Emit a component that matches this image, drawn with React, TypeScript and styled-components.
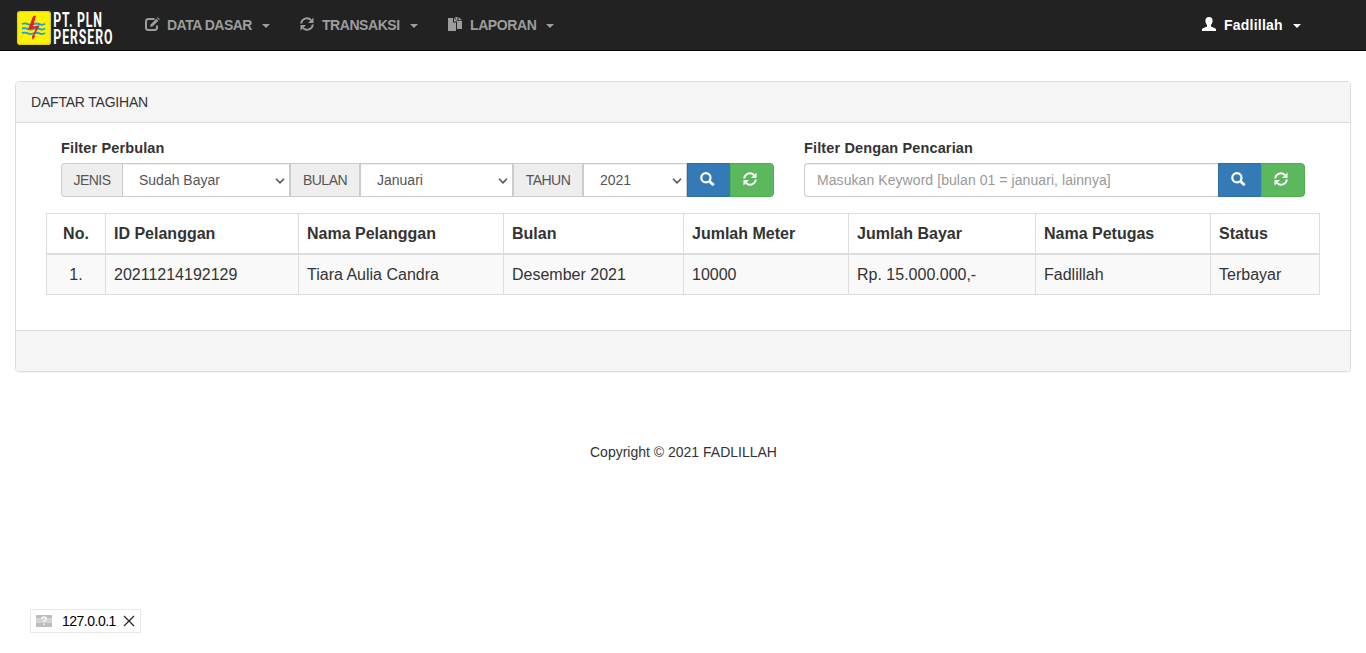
import React from "react";
import styled, { createGlobalStyle } from "styled-components";

const Global = createGlobalStyle`
  *, *::before, *::after { box-sizing: border-box; }
  body {
    margin: 0;
    background: #fff;
    color: #333;
    font: 14px/20px "Liberation Sans", Arial, sans-serif;
    overflow: hidden;
  }
`;

const Page = styled.div`
  display: flex;
  flex-direction: column;
  height: 653px;
`;

const Navbar = styled.nav`
  display: flex;
  height: 51px;
  flex: none;
  background: #222;
  border-bottom: 1px solid #080808;
  padding: 0 50px 0 15px;
`;

const Brand = styled.a`
  width: 115px;
  height: 50px;
  padding-top: 8px;
`;

const NavItem = styled.a<{ $w?: number; $spacing: number; $active?: boolean }>`
  display: flex;
  align-items: center;
  width: ${(p) => p.$w}px;
  height: 50px;
  padding: 0 15px;
  margin-left: ${(p) => (p.$active ? "auto" : "0")};
  color: ${(p) => (p.$active ? "#fff" : "#9d9d9d")};
  font-weight: bold;
  letter-spacing: ${(p) => p.$spacing}px;
  white-space: pre;
`;

const NavIcon = styled.svg`
  width: 15px;
  height: 14px;
  margin: -3px 7px 0 0;
  flex: none;
`;

const Caret = styled.span`
  margin: 2px 0 0 auto;
  border: 4px solid transparent;
  border-top-color: currentColor;
  border-bottom: 0;
`;

const Panel = styled.section`
  flex: none;
  margin: 30px 15px 0;
  border: 1px solid #ddd;
  border-radius: 4px;
  box-shadow: 0 1px 1px rgba(0, 0, 0, 0.05);
`;

const PanelHeading = styled.header`
  padding: 10px 15px;
  background: #f5f5f5;
  border-bottom: 1px solid #ddd;
  border-radius: 3px 3px 0 0;
  letter-spacing: -0.2px;
`;

const PanelBody = styled.div`
  padding: 15px 30px 35px;
`;

const PanelFooter = styled.footer`
  height: 41px;
  background: #f5f5f5;
  border-top: 1px solid #ddd;
  border-radius: 0 0 3px 3px;
`;

const Filters = styled.div`
  display: grid;
  grid-template-columns: 713px 501px;
  column-gap: 30px;
  padding: 0 15px;
  margin-bottom: 16px;
`;

const FilterLabel = styled.div`
  font-size: 14.5px;
  font-weight: bold;
  letter-spacing: 0.13px;
  margin-bottom: 5px;
`;

const InputGroup = styled.div`
  display: flex;
  height: 34px;
`;

const Addon = styled.span<{ $w: number; $first?: boolean }>`
  width: ${(p) => p.$w}px;
  padding: 6px 0;
  text-align: center;
  letter-spacing: -0.5px;
  background: #eee;
  color: #555;
  border: 1px solid #ccc;
  border-right-width: ${(p) => (p.$first ? 0 : 1)}px;
  border-radius: ${(p) => (p.$first ? "4px 0 0 4px" : "0")};
`;

const SelectBox = styled.div<{ $w: number }>`
  display: grid;
  align-items: center;
  width: ${(p) => p.$w}px;
  & > * { grid-area: 1 / 1; }
`;

const SelectField = styled.select`
  appearance: none;
  width: 100%;
  height: 34px;
  padding: 6px 16px;
  font: inherit;
  color: #555;
  background: #fff;
  border: 1px solid #ccc;
  border-radius: 0;
  box-shadow: inset 0 1px 1px rgba(0, 0, 0, 0.075);
`;

const Chevron = styled.svg`
  justify-self: end;
  margin: 1px 5px 0 0;
  pointer-events: none;
`;

const Select = ({ width, value }: { width: number; value: string }) => (
  <SelectBox $w={width}>
    <SelectField><option>{value}</option></SelectField>
    <Chevron width="10" height="6" viewBox="0 0 10 6" fill="none" stroke="#555" strokeWidth="1.600">
      <path d="M1 .8L5 4.800L9 .8" />
    </Chevron>
  </SelectBox>
);

const SearchInput = styled.input`
  flex: 1;
  min-width: 0;
  height: 34px;
  padding: 6px 12px;
  font: inherit;
  letter-spacing: 0.07px;
  color: #555;
  border: 1px solid #ccc;
  border-right: 0;
  border-radius: 4px 0 0 4px;
  box-shadow: inset 0 1px 1px rgba(0, 0, 0, 0.075);
  &::placeholder { color: #999; }
`;

const Button = styled.button<{ $kind: "search" | "refresh" }>`
  width: ${(p) => (p.$kind === "search" ? 43 : 44)}px;
  height: 34px;
  padding: 0 0 2px 12px;
  display: flex;
  align-items: center;
  color: #fff;
  background: ${(p) => (p.$kind === "search" ? "#337ab7" : "#5cb85c")};
  border: 1px solid ${(p) => (p.$kind === "search" ? "#2e6da4" : "#4cae4c")};
  border-right-width: ${(p) => (p.$kind === "search" ? 0 : 1)}px;
  border-radius: ${(p) => (p.$kind === "search" ? "0" : "0 4px 4px 0")};
`;

const Table = styled.table`
  width: 1274px;
  table-layout: fixed;
  border-collapse: collapse;
  font-size: 16px;
  line-height: 22px;
`;

const Th = styled.th<{ $w: number; $center?: boolean }>`
  width: ${(p) => p.$w}px;
  height: 40px;
  padding: 9px 8px 7px;
  text-align: ${(p) => (p.$center ? "center" : "left")};
  border: 1px solid #ddd;
  border-bottom-width: 2px;
`;

const Td = styled.td<{ $center?: boolean }>`
  height: 41px;
  padding: 9px 8px 8px;
  text-align: ${(p) => (p.$center ? "center" : "left")};
  background: #f9f9f9;
  border: 1px solid #ddd;
`;

const Copyright = styled.p`
  margin: 70px 0 0 1px;
  text-align: center;
`;

const HostChip = styled.div`
  display: flex;
  align-items: center;
  align-self: flex-start;
  width: 111px;
  height: 24px;
  margin: auto 0 20px 30px;
  padding-left: 5px;
  border: 1px solid #e8e8e8;
  color: #000;
`;

const HostName = styled.span`
  width: 54px;
  margin: 0 7px 0 10px;
  letter-spacing: -0.5px;
`;

const Logo = () => (
  <svg width="100" height="42" viewBox="0 0 100 42">
    <rect x="2.6" y="3.6" width="32.8" height="32.8" rx="2.5" fill="#fff200" stroke="#d9cf2c" strokeWidth="1.3" />
    <g fill="none" stroke="#1ba1e2" strokeWidth="1.900">
      {[16.3, 21, 25.5].map((y) => (
        <path key={y} d={`M7 ${y - 0.5}q3 -1 5.800 .4t5.800 0t5.800 0t5.800 -.4`} />
      ))}
    </g>
    <path d="M18 8.300L21 7.600L18 18.500L24.700 17.300L19.300 27.500L20.300 28L17.500 32L16.900 27.400L18 27.500L21 20L13 21.800z" fill="#e31e24" />
    <g fill="#fff" fontFamily="Roboto, 'Liberation Sans', sans-serif" fontWeight="700" fontSize="19.500" letterSpacing="2">
      <text transform="translate(38.300 18.600) scale(.63 1)" textLength="79" lengthAdjust="spacing">PT. PLN</text>
      <text transform="translate(38.300 35.600) scale(.63 1)" textLength="96" lengthAdjust="spacing">PERSERO</text>
    </g>
  </svg>
);

const EditIcon = () => (
  <NavIcon viewBox="0 0 15 14" fill="none" stroke="currentColor" strokeWidth="2">
    <path d="M9.500 2H3.500Q1 2 1 4.500V10.500Q1 13 3.500 13H9.500Q12 13 12 10.500V8.500" />
    <path d="M5 10L5.800 7.200 11.300 1.700 13.300 3.700 7.800 9.200Z" fill="currentColor" stroke="none" />
    <path d="M12 1l.8-.8 2 2-.8.8z" fill="currentColor" stroke="none" />
  </NavIcon>
);

const RefreshShape = () => (
  <>
    <path d="M1.200 6.500A5.700 5.700 0 0 1 11 3M12.800 7.500A5.700 5.700 0 0 1 3 11" fill="none" stroke="currentColor" strokeWidth="1.900" />
    <path d="M13.500.5V6H8zM.5 13.500V8H6z" fill="currentColor" />
  </>
);

const RefreshIcon = () => (
  <NavIcon viewBox="0 0 15 14"><RefreshShape /></NavIcon>
);

const FilesIcon = () => (
  <NavIcon viewBox="0 0 15 14" fill="currentColor">
    <path d="M0 1H5V5.500H8V14H0zM6 0.500L9 4.500H6z" />
    <path d="M7 0H9.500V4H14V12H9V4.500zM10.500 0L14 3.200H10.500z" />
  </NavIcon>
);

const UserIcon = () => (
  <NavIcon viewBox="0 0 15 14" fill="currentColor">
    <path d="M7 0C9.400 0 10.800 1.500 10.600 4C10.500 5.800 9.700 7 9 8V9.500L13 11.200Q14 11.700 14 12.500V14H0V12.500Q0 11.700 1 11.200L5 9.500V8C4.300 7 3.500 5.800 3.400 4C3.200 1.500 4.600 0 7 0z" />
  </NavIcon>
);

const ActionButtons = () => (
  <>
    <Button $kind="search" aria-label="Cari">
      <svg width="15" height="14" viewBox="0 0 15 14" fill="none" stroke="currentColor">
        <circle cx="5.900" cy="5.700" r="4.600" strokeWidth="2.200" />
        <path d="M9.200 9L13.700 13.200" strokeWidth="2.900" />
      </svg>
    </Button>
    <Button $kind="refresh" aria-label="Muat ulang">
      <svg width="14" height="14" viewBox="0 0 14 14"><RefreshShape /></svg>
    </Button>
  </>
);

const columns = [
  { title: "No.", width: 59, value: "1.", center: true },
  { title: "ID Pelanggan", width: 193, value: "20211214192129" },
  { title: "Nama Pelanggan", width: 205, value: "Tiara Aulia Candra" },
  { title: "Bulan", width: 180, value: "Desember 2021" },
  { title: "Jumlah Meter", width: 165, value: "10000" },
  { title: "Jumlah Bayar", width: 187, value: "Rp. 15.000.000,-" },
  { title: "Nama Petugas", width: 175, value: "Fadlillah" },
  { title: "Status", width: 109, value: "Terbayar" },
];

export default function App() {
  return (
    <Page>
      <Global />
      <Navbar>
        <Brand><Logo /></Brand>
        <NavItem $w={155} $spacing={-0.5}><EditIcon />DATA DASAR<Caret /></NavItem>
        <NavItem $w={148} $spacing={-0.45}><RefreshIcon />TRANSAKSI<Caret /></NavItem>
        <NavItem $w={136} $spacing={-0.4}><FilesIcon />LAPORAN<Caret /></NavItem>
        <NavItem $w={129} $spacing={0.22} $active><UserIcon />Fadlillah<Caret /></NavItem>
      </Navbar>
      <Panel>
        <PanelHeading>DAFTAR TAGIHAN</PanelHeading>
        <PanelBody>
          <Filters>
            <div>
              <FilterLabel>Filter Perbulan</FilterLabel>
              <InputGroup>
                <Addon $w={61} $first>JENIS</Addon>
                <Select width={168} value="Sudah Bayar" />
                <Addon $w={70}>BULAN</Addon>
                <Select width={153} value="Januari" />
                <Addon $w={70}>TAHUN</Addon>
                <Select width={104} value="2021" />
                <ActionButtons />
              </InputGroup>
            </div>
            <div>
              <FilterLabel>Filter Dengan Pencarian</FilterLabel>
              <InputGroup>
                <SearchInput placeholder="Masukan Keyword [bulan 01 = januari, lainnya]" />
                <ActionButtons />
              </InputGroup>
            </div>
          </Filters>
          <Table>
            <thead>
              <tr>
                {columns.map((c) => (
                  <Th key={c.title} $w={c.width} $center={c.center}>{c.title}</Th>
                ))}
              </tr>
            </thead>
            <tbody>
              <tr>
                {columns.map((c) => (
                  <Td key={c.title} $center={c.center}>{c.value}</Td>
                ))}
              </tr>
            </tbody>
          </Table>
        </PanelBody>
        <PanelFooter />
      </Panel>
      <Copyright>Copyright © 2021 FADLILLAH</Copyright>
      <HostChip>
        <svg width="16" height="12" viewBox="0 0 16 12">
          <path d="M0 0H16V12H0z" fill="#d4d4d4" />
          <path d="M0 0H16V3H0zM0 8H16V12H0z" fill="#bdbdbd" />
          <path d="M5.800 4Q5.800 2 8 2T10.200 4Q10.200 5 8 6V7M8 8.500V10" fill="none" stroke="#fff" strokeWidth="1.300" />
        </svg>
        <HostName>127.0.0.1</HostName>
        <svg width="12" height="12" viewBox="0 0 12 12" stroke="#222" strokeWidth="1.200">
          <path d="M1 1L11 11M11 1L1 11" />
        </svg>
      </HostChip>
    </Page>
  );
}
